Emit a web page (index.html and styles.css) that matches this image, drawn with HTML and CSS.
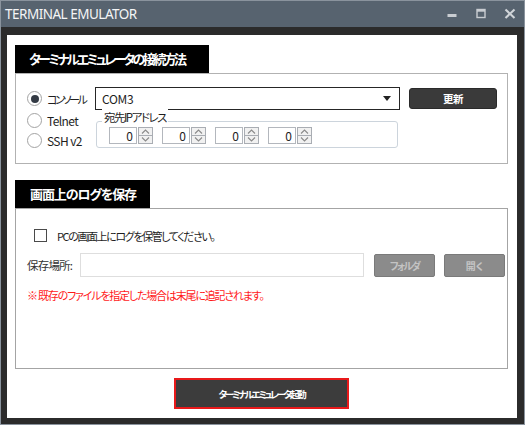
FILE: index.html
```html
<!DOCTYPE html>
<html lang="ja">
<head>
<meta charset="utf-8">
<title>TERMINAL EMULATOR</title>
<link rel="stylesheet" href="styles.css">
</head>
<body>
<div class="window">
  <div class="titlebar">
    <span class="title">TERMINAL EMULATOR</span>
    <div class="controls">
      <div class="ctl"><svg width="12" height="12" viewBox="0 0 12 12"><rect x="1.5" y="6" width="9" height="3" fill="#c9cdd2"/></svg></div>
      <div class="ctl"><svg width="12" height="12" viewBox="0 0 12 12"><rect x="2" y="1.5" width="8" height="8" fill="none" stroke="#c9cdd2" stroke-width="1.4"/><rect x="2" y="1.5" width="8" height="2.2" fill="#c9cdd2"/></svg></div>
      <div class="ctl"><svg width="12" height="12" viewBox="0 0 12 12"><path d="M1.5 1.5 L10.5 10 M10.5 1.5 L1.5 10" stroke="#d0d4d8" stroke-width="2.1" fill="none"/></svg></div>
    </div>
  </div>
  <div class="frame">
    <div class="client">
      <section class="sec">
        <div class="tab tab1">ターミナルエミュレータの接続方法</div>
        <div class="box box1">
          <div class="row1">
            <label class="radio"><span class="rc checked"></span><span class="jp">コンソール</span></label>
            <div class="combo"><span>COM3</span><svg class="arrow" width="8" height="5" viewBox="0 0 8 5"><path d="M0 0 H8 L4 5 Z" fill="#222"/></svg></div>
            <button class="btn-dark">更新</button>
          </div>
          <div class="row2">
            <div class="radios">
              <label class="radio item"><span class="rc"></span><span class="en">Telnet</span></label>
              <label class="radio item"><span class="rc"></span><span class="en">SSH v2</span></label>
            </div>
            <div class="group">
              <span class="group-label">宛先IPアドレス</span>
              <div class="spins">
                <div class="spin"><div class="spin-text">0</div><div class="spin-btns"><div class="sb"><svg width="9" height="5" viewBox="0 0 9 5"><path d="M1 4.5 L4.5 1 L8 4.5" stroke="#8a8a8a" fill="none" stroke-width="1.1"/></svg></div><div class="sb"><svg width="9" height="5" viewBox="0 0 9 5"><path d="M1 0.5 L4.5 4 L8 0.5" stroke="#8a8a8a" fill="none" stroke-width="1.1"/></svg></div></div></div>
                <div class="spin"><div class="spin-text">0</div><div class="spin-btns"><div class="sb"><svg width="9" height="5" viewBox="0 0 9 5"><path d="M1 4.5 L4.5 1 L8 4.5" stroke="#8a8a8a" fill="none" stroke-width="1.1"/></svg></div><div class="sb"><svg width="9" height="5" viewBox="0 0 9 5"><path d="M1 0.5 L4.5 4 L8 0.5" stroke="#8a8a8a" fill="none" stroke-width="1.1"/></svg></div></div></div>
                <div class="spin"><div class="spin-text">0</div><div class="spin-btns"><div class="sb"><svg width="9" height="5" viewBox="0 0 9 5"><path d="M1 4.5 L4.5 1 L8 4.5" stroke="#8a8a8a" fill="none" stroke-width="1.1"/></svg></div><div class="sb"><svg width="9" height="5" viewBox="0 0 9 5"><path d="M1 0.5 L4.5 4 L8 0.5" stroke="#8a8a8a" fill="none" stroke-width="1.1"/></svg></div></div></div>
                <div class="spin"><div class="spin-text">0</div><div class="spin-btns"><div class="sb"><svg width="9" height="5" viewBox="0 0 9 5"><path d="M1 4.5 L4.5 1 L8 4.5" stroke="#8a8a8a" fill="none" stroke-width="1.1"/></svg></div><div class="sb"><svg width="9" height="5" viewBox="0 0 9 5"><path d="M1 0.5 L4.5 4 L8 0.5" stroke="#8a8a8a" fill="none" stroke-width="1.1"/></svg></div></div></div>
              </div>
            </div>
          </div>
        </div>
      </section>

      <section class="sec sec2">
        <div class="tab tab2">画面上のログを保存</div>
        <div class="box box2">
          <label class="check-row"><span class="cb"></span><span class="check-text">PCの画面上にログを保管してください。</span></label>
          <div class="path-row">
            <span class="path-label">保存場所:</span>
            <div class="path-input"></div>
            <button class="btn-gray">フォルダ</button>
            <button class="btn-gray second">開く</button>
          </div>
          <p class="note">※ 既存のファイルを指定した場合は末尾に追記されます。</p>
        </div>
      </section>

      <button class="launch">ターミナルエミュレータ起動</button>
    </div>
  </div>
</div>
</body>
</html>
```
FILE: styles.css
```css
* { box-sizing: border-box; }
html, body { margin: 0; padding: 0; background: #fff; }
body {
  font-family: "Noto Sans CJK JP", "Noto Sans", sans-serif;
  font-feature-settings: "palt";
  color: #1e1e1e;
}
.window {
  width: 525px;
  height: 425px;
  border: 1px solid #8a939d;
  background: #2b2b2b;
  display: flex;
  flex-direction: column;
}
.titlebar {
  height: 26px;
  flex: none;
  background: #57636f;
  display: flex;
  align-items: center;
  padding-left: 4px;
}
.title {
  font-family: "Noto Sans", sans-serif;
  font-size: 13.5px;
  color: #f4f5f6;
  letter-spacing: -0.5px;
}
.controls { margin-left: auto; display: flex; }
.ctl { width: 29px; height: 26px; display: flex; align-items: center; justify-content: center; }

.frame { flex: 1; padding: 8px 7px 6px 6px; }
.client {
  background: #fff;
  height: 100%;
  padding: 10px 9px 9px 8px;
  display: flex;
  flex-direction: column;
}
.sec { display: flex; flex-direction: column; }
.tab {
  background: #000;
  color: #fff;
  height: 28px;
  line-height: 28px;
  font-size: 13px;
  font-weight: bold;
  padding-left: 14px;
  white-space: nowrap;
  overflow: hidden;
}
.tab1 { width: 194px; letter-spacing: -2.6px; }
.tab2 { width: 135px; letter-spacing: -1.1px; padding-left: 15px; }
.box { border: 1px solid #b2b2b2; }
.box1 { padding: 13px 0 13px 11px; }

.row1 { display: flex; align-items: center; height: 23px; }
.radio {
  flex: none;
  width: 68px;
  display: flex;
  align-items: center;
  gap: 5px;
  font-size: 12px;
  white-space: nowrap;
}
.jp { font-size: 11px; letter-spacing: -2.4px; }
.en { font-size: 12px; letter-spacing: -0.6px; }
.rc {
  width: 15px;
  height: 15px;
  border-radius: 50%;
  border: 1px solid #a3a3a3;
  background: #fff;
  display: flex;
  align-items: center;
  justify-content: center;
  flex: none;
}
.rc.checked::after {
  content: "";
  width: 8px;
  height: 8px;
  border-radius: 50%;
  background: #333a44;
}
.combo {
  flex: none;
  width: 305px;
  height: 23px;
  border: 1px solid #262626;
  display: flex;
  align-items: center;
  padding: 0 8px 0 6px;
  font-size: 12px;
  letter-spacing: -0.3px;
}
.combo .arrow { margin-left: auto; }
.btn-dark {
  flex: none;
  margin-left: 9px;
  width: 88px;
  height: 21px;
  background: #3a3a3a;
  border: 1px solid #2a2a2a;
  border-radius: 3px;
  color: #fff;
  font-family: inherit;
  font-feature-settings: "palt";
  font-size: 10.5px;
  font-weight: bold;
  letter-spacing: -0.5px;
  padding: 0;
}

.row2 { display: flex; align-items: flex-start; }
.radios { width: 68px; flex: none; display: flex; flex-direction: column; }
.radio.item { height: 20px; }
.group {
  position: relative;
  margin-left: 1px;
  margin-top: 11px;
  width: 302px;
  height: 27px;
  border: 1px solid #ccd4dc;
  border-radius: 3px;
  padding: 5px 0 0 12px;
}
.group-label {
  position: absolute;
  top: -13px;
  left: 5px;
  padding: 0 2px;
  background: #fff;
  font-size: 11.5px;
  letter-spacing: -1.5px;
  line-height: 16px;
  white-space: nowrap;
}
.spins { display: flex; gap: 9px; }
.spin { display: flex; gap: 1px; }
.spin-text {
  width: 28px;
  height: 17px;
  border: 1px solid #b3b7bd;
  text-align: right;
  padding-right: 3px;
  font-size: 12px;
  line-height: 15px;
}
.spin-btns { width: 15px; height: 17px; display: flex; flex-direction: column; }
.sb {
  flex: 1;
  border: 1px solid #a9adb3;
  background: #f1f1f1;
  display: flex;
  align-items: center;
  justify-content: center;
}
.sb + .sb { border-top: none; }

.sec2 { margin-top: 16px; }
.box2 {
  height: 161px;
  border-color: #a4a4a4;
  padding: 20px 0 0 11px;
}
.check-row {
  display: flex;
  align-items: center;
  gap: 10px;
  margin-left: 7px;
  height: 13px;
}
.check-text { font-size: 11px; letter-spacing: -1.4px; white-space: nowrap; }
.cb {
  width: 13px;
  height: 13px;
  border: 1px solid #4a4a4a;
  background: #fff;
  flex: none;
}
.path-row {
  display: flex;
  align-items: center;
  margin-top: 11px;
  height: 24px;
}
.path-label { width: 53px; flex: none; font-size: 11.5px; letter-spacing: -0.8px; color: #333; }
.path-input { width: 284px; flex: none; height: 24px; border: 1px solid #dedede; }
.btn-gray {
  flex: none;
  margin-left: 10px;
  width: 61px;
  height: 23px;
  background: #8b8b8b;
  border: 1px solid #7a7a7a;
  border-radius: 2px;
  color: #c4c4c4;
  font-family: inherit;
  font-feature-settings: "palt";
  font-size: 10px;
  font-weight: bold;
  letter-spacing: -1.8px;
  padding: 0;
}
.btn-gray.second { margin-left: 9px; letter-spacing: 0; }
.note {
  margin: 11px 0 0 0;
  font-size: 11px;
  line-height: 14px;
  letter-spacing: -1.2px;
  color: #ff1a1a;
  white-space: nowrap;
}

.launch {
  margin-top: 9px;
  align-self: center;
  width: 175px;
  height: 31px;
  border: 2px solid #e8191a;
  background: #3c3c3c;
  color: #fff;
  font-family: inherit;
  font-feature-settings: "palt";
  font-size: 9.5px;
  font-weight: bold;
  letter-spacing: -2.3px;
  padding: 0;
}
```
